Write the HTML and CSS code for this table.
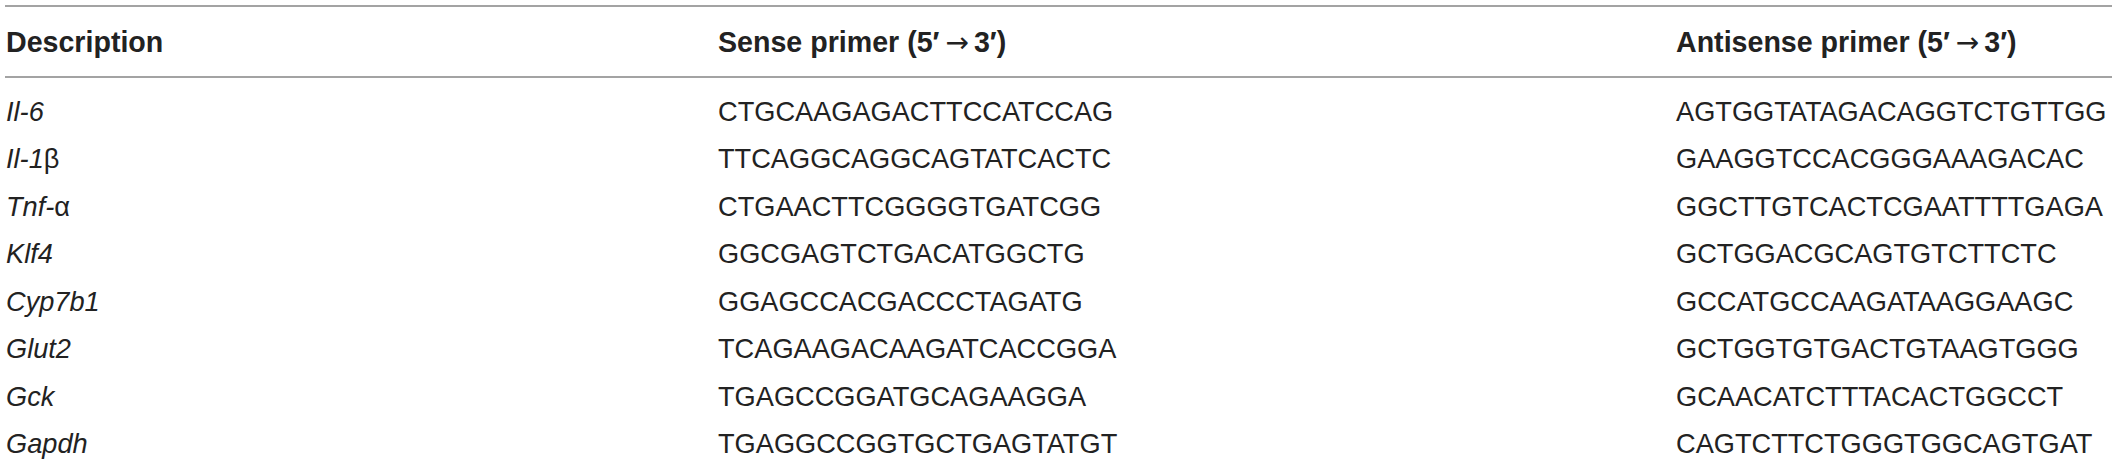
FILE: index.html
```html
<!DOCTYPE html>
<html lang="en">
<head>
<meta charset="utf-8">
<title>Primer sequences</title>
<link rel="stylesheet" href="styles.css">
</head>
<body>
<div class="table">
  <div class="row head">
    <div class="cell">Description</div>
    <div class="cell">Sense primer (5′<span class="arrow">→</span>3′)</div>
    <div class="cell">Antisense primer (5′<span class="arrow">→</span>3′)</div>
  </div>
  <div class="body">
    <div class="row"><div class="cell gene"><i>Il-6</i></div><div class="cell">CTGCAAGAGACTTCCATCCAG</div><div class="cell">AGTGGTATAGACAGGTCTGTTGG</div></div>
    <div class="row"><div class="cell gene"><i>Il-1</i>β</div><div class="cell">TTCAGGCAGGCAGTATCACTC</div><div class="cell">GAAGGTCCACGGGAAAGACAC</div></div>
    <div class="row"><div class="cell gene"><i>Tnf-</i>α</div><div class="cell">CTGAACTTCGGGGTGATCGG</div><div class="cell">GGCTTGTCACTCGAATTTTGAGA</div></div>
    <div class="row"><div class="cell gene"><i>Klf4</i></div><div class="cell">GGCGAGTCTGACATGGCTG</div><div class="cell">GCTGGACGCAGTGTCTTCTC</div></div>
    <div class="row"><div class="cell gene"><i>Cyp7b1</i></div><div class="cell">GGAGCCACGACCCTAGATG</div><div class="cell">GCCATGCCAAGATAAGGAAGC</div></div>
    <div class="row"><div class="cell gene"><i>Glut2</i></div><div class="cell">TCAGAAGACAAGATCACCGGA</div><div class="cell">GCTGGTGTGACTGTAAGTGGG</div></div>
    <div class="row"><div class="cell gene"><i>Gck</i></div><div class="cell">TGAGCCGGATGCAGAAGGA</div><div class="cell">GCAACATCTTTACACTGGCCT</div></div>
    <div class="row"><div class="cell gene"><i>Gapdh</i></div><div class="cell">TGAGGCCGGTGCTGAGTATGT</div><div class="cell">CAGTCTTCTGGGTGGCAGTGAT</div></div>
  </div>
</div>
</body>
</html>
```

FILE: styles.css
```css
html, body {
  margin: 0;
  padding: 0;
  background: #ffffff;
}

body {
  font-family: "Liberation Sans", Arial, Helvetica, sans-serif;
  color: #222222;
  font-size: 27.2px;
}

.table {
  margin: 5px 5px 0 5px;
}

.row {
  display: grid;
  grid-template-columns: 712px 958px 1fr;
  padding-left: 1px;
  height: 47.47px;
  line-height: 47.47px;
  white-space: nowrap;
}

.head {
  border-top: 2px solid #a3a3a3;
  border-bottom: 2px solid #a3a3a3;
  height: 69px;
  box-sizing: content-box;
  line-height: 71px;
  font-weight: bold;
  font-size: 28.6px;
}

.arrow {
  font-family: "DejaVu Sans", sans-serif;
  font-weight: normal;
  font-size: 28px;
  margin: 0 5px 0 6px;
}

.body {
  padding-top: 10px;
}

.gene i {
  font-style: italic;
}
```
